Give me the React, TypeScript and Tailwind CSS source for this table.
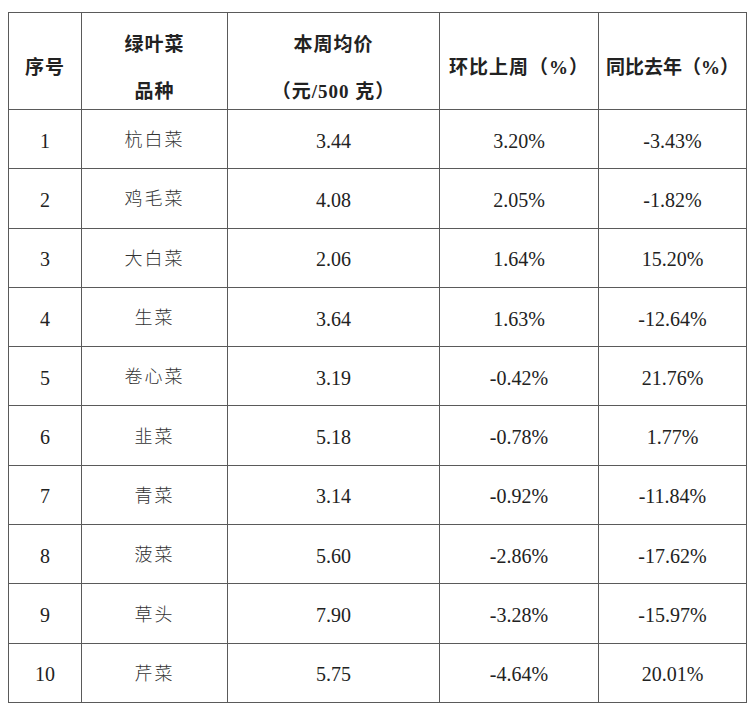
const rows = [
  ['1', '杭白菜', '3.44', '3.20%', '-3.43%'],
  ['2', '鸡毛菜', '4.08', '2.05%', '-1.82%'],
  ['3', '大白菜', '2.06', '1.64%', '15.20%'],
  ['4', '生菜', '3.64', '1.63%', '-12.64%'],
  ['5', '卷心菜', '3.19', '-0.42%', '21.76%'],
  ['6', '韭菜', '5.18', '-0.78%', '1.77%'],
  ['7', '青菜', '3.14', '-0.92%', '-11.84%'],
  ['8', '菠菜', '5.60', '-2.86%', '-17.62%'],
  ['9', '草头', '7.90', '-3.28%', '-15.97%'],
  ['10', '芹菜', '5.75', '-4.64%', '20.01%'],
];

export default function App() {
  const cell = 'border border-[#5a5a5a] text-center align-middle p-0';
  return (
    <div
      className="w-[756px] h-[707px] bg-white pt-[12px] pl-[8px] text-[#222]"
      style={{ fontFamily: '"Liberation Serif", "Noto Sans CJK SC", serif' }}
    >
      <table className="border-collapse table-fixed w-[738px]">
        <colgroup>
          <col className="w-[73px]" />
          <col className="w-[146px]" />
          <col className="w-[212px]" />
          <col className="w-[159px]" />
          <col className="w-[148px]" />
        </colgroup>
        <thead>
          <tr className="h-[97px] text-[19px] font-medium leading-[30px]">
            <th className={`${cell} pt-[14px] tracking-[1px]`}>序号</th>
            <th className={`${cell} pt-[14px] tracking-[1px]`}>
              <span className="block">绿叶菜</span>
              <span className="block mt-[17px]">品种</span>
            </th>
            <th className={`${cell} pt-[14px] tracking-[1px]`}>
              <span className="block">本周均价</span>
              <span className="block mt-[17px]">
                （元/<b className="font-bold">500</b> 克）
              </span>
            </th>
            <th className={`${cell} pt-[14px] tracking-[1px]`}>
              环比上周（<b className="font-bold">%</b>）
            </th>
            <th className={`${cell} pt-[14px]`}>
              同比去年（<b className="font-bold">%</b>）
            </th>
          </tr>
        </thead>
        <tbody>
          {rows.map((r) => (
            <tr key={r[0]} className="h-[59.3px] text-[20px]">
              <td className={`${cell} pt-[3px]`}>{r[0]}</td>
              <td className={`${cell} pt-[3px] text-[18px] tracking-[2px] font-light text-[#333]`}>{r[1]}</td>
              <td className={`${cell} pt-[3px]`}>{r[2]}</td>
              <td className={`${cell} pt-[3px]`}>{r[3]}</td>
              <td className={`${cell} pt-[3px]`}>{r[4]}</td>
            </tr>
          ))}
        </tbody>
      </table>
    </div>
  );
}
